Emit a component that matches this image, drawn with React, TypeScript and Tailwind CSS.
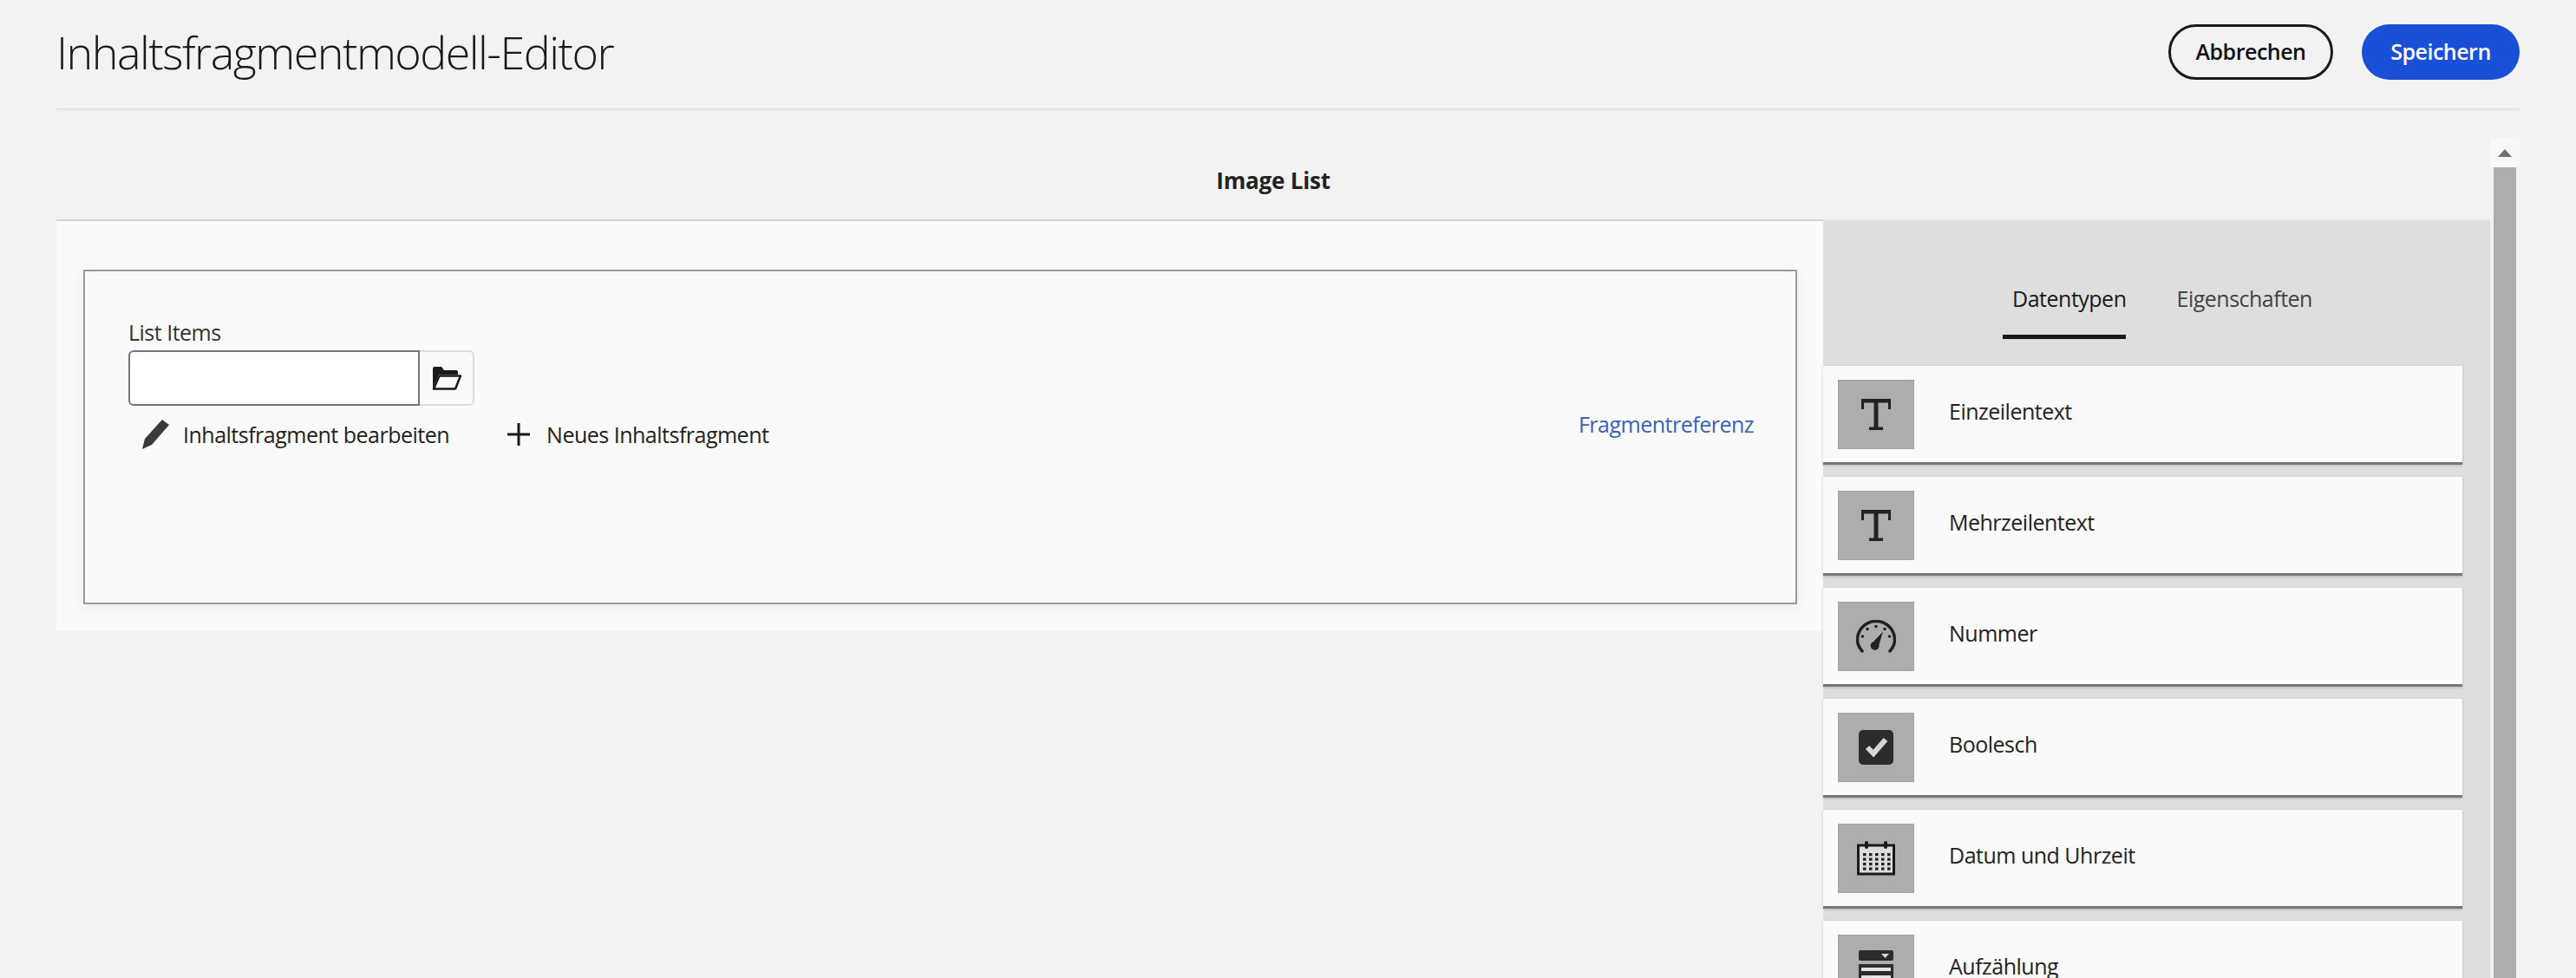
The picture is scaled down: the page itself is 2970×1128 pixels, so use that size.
const dataTypes = [
    { label: "Einzeilentext", icon: <TextIcon /> },
    { label: "Mehrzeilentext", icon: <TextIcon /> },
    { label: "Nummer", icon: <GaugeIcon /> },
    { label: "Boolesch", icon: <CheckIcon /> },
    { label: "Datum und Uhrzeit", icon: <CalendarIcon /> },
    { label: "Aufzählung", icon: <EnumIcon /> },
];

function TextIcon() {
    return (
        <svg width="36" height="38" viewBox="0 0 36 38" fill="#222">
            <path d="M1 1h34v12h-3V5.500H20.500V33.500H26v3.500H10v-3.500h5.500V5.500H4V13H1z" />
        </svg>
    );
}

function GaugeIcon() {
    return (
        <svg width="46" height="38" viewBox="0 0 46 38" fill="none">
            <path d="M7 36C3.500 32 1.500 28 1.500 23a21.500 21.500 0 0 1 43 0c0 5-2 9-5.500 13" stroke="#222" strokeWidth="3.500" strokeLinecap="round" />
            <g fill="#222">
                <circle cx="23" cy="7.500" r="1.800" />
                <circle cx="13" cy="10.500" r="1.800" />
                <circle cx="33" cy="10.500" r="1.800" />
                <circle cx="7.500" cy="19" r="1.800" />
                <circle cx="38.500" cy="19" r="1.800" />
                <path d="M31 13.500 26.500 28.500a5 5 0 1 1-6.500-3.500z" />
            </g>
        </svg>
    );
}

function CheckIcon() {
    return (
        <svg width="40" height="40" viewBox="0 0 40 40">
            <rect width="40" height="40" rx="5" fill="#2c2c2c" />
            <path d="M10 20l7 7L31 11" fill="none" stroke="#d6d6d6" strokeWidth="6" />
        </svg>
    );
}

function CalendarIcon() {
    const cells = [];
    for (let r = 0; r < 4; r++) {
        for (let c = 0; c < 5; c++) {
            cells.push(<rect key={`${r}-${c}`} x={7 + c * 7} y={14 + r * 5.500} width="3.500" height="3.200" fill="#222" />);
        }
    }
    return (
        <svg width="44" height="40" viewBox="0 0 44 40">
            <rect x="1.500" y="5" width="41" height="33" fill="#dcdcdc" stroke="#1a1a1a" strokeWidth="3" />
            <rect x="9" y="0" width="4" height="9" rx="2" fill="#1a1a1a" />
            <rect x="31" y="0" width="4" height="9" rx="2" fill="#1a1a1a" />
            {cells}
        </svg>
    );
}

function EnumIcon() {
    return (
        <svg width="40" height="44" viewBox="0 0 40 44">
            <rect width="40" height="12" rx="2" fill="#2c2c2c" />
            <path d="M26 4h9l-4.500 5z" fill="#d6d6d6" />
            <rect x="0" y="16" width="40" height="28" fill="#2c2c2c" />
            <rect x="3" y="20" width="34" height="4" fill="#e4e4e4" />
            <rect x="3" y="29" width="34" height="4" fill="#e4e4e4" />
        </svg>
    );
}

function FolderIcon() {
    return (
        <svg width="34" height="28" viewBox="0 0 34 28" fill="#1a1a1a">
            <path d="M1 26 1 3a2 2 0 0 1 2-2h8l3 4h14a2 2 0 0 1 2 2v3H8z" />
            <path d="M8.500 11.500H33L27 26.500H2z" fill="#fafafa" stroke="#1a1a1a" strokeWidth="2.500" strokeLinejoin="round" />
        </svg>
    );
}

function PencilIcon() {
    return (
        <svg width="32" height="34" viewBox="0 0 32 34" fill="#3a3a3a">
            <path d="M24 0l8 6L12 29 1 34l3-12z" />
        </svg>
    );
}

function PlusIcon() {
    return (
        <svg width="26" height="26" viewBox="0 0 26 26" fill="#1a1a1a">
            <rect x="11.500" y="0" width="3" height="26" />
            <rect x="0" y="11.500" width="26" height="3" />
        </svg>
    );
}

export default function App() {
    return (
        <div className="h-[1128px] overflow-hidden bg-[#f2f2f2] px-[65px] font-['Open_Sans',sans-serif] text-[#222]">
            <header className="flex h-[127px] items-center justify-between border-b-2 border-[#e2e2e2] pb-[5px]">
                <h1 className="text-[52px] font-light tracking-[-1.5px] text-[#1a1a1a]">Inhaltsfragmentmodell-Editor</h1>
                <div className="flex gap-[33px] text-[25px] font-semibold">
                    <button className="h-[64px] w-[190px] rounded-full border-[3px] border-[#1a1a1a] tracking-[-0.5px] text-[#111]">Abbrechen</button>
                    <button className="h-[64px] w-[182px] rounded-full bg-[#1a50d6] tracking-[-0.5px] text-white">Speichern</button>
                </div>
            </header>

            <div className="mt-[33px] flex">
                <div className="w-[2806px]">
                    <div className="flex h-[93px] items-center justify-center pt-[4px] text-[26px] font-bold tracking-[-0.2px] text-[#222]">Image List</div>
                    <div className="flex">
                        <main className="h-[475px] w-[2037px] border-t-2 border-[#d4d4d4] bg-[#fafafa] pt-[56px] pr-[30px] pl-[31px]">
                            <div className="flex h-[386px] items-start justify-between border-2 border-[#9a9a9a] pt-[52px] pr-[48px] pl-[50px] shadow-[0_4px_14px_rgba(0,0,0,0.06)]">
                                <div>
                                    <label className="mb-[3px] block text-[25px] leading-[36px] tracking-[-0.5px] text-[#333]">List Items</label>
                                    <div className="flex h-[64px]">
                                        <input className="h-full w-[336px] rounded-l-[6px] border-2 border-[#777] bg-white" />
                                        <div className="flex h-full w-[63px] items-center justify-center rounded-r-[6px] border-2 border-l-0 border-[#dcdcdc]">
                                            <FolderIcon />
                                        </div>
                                    </div>
                                    <div className="mt-[15px] flex items-center pl-[15px] text-[25px] leading-[36px] tracking-[-0.5px] text-[#222]">
                                        <PencilIcon />
                                        <span className="ml-[16px]">Inhaltsfragment bearbeiten</span>
                                        <span className="ml-[67px]"><PlusIcon /></span>
                                        <span className="ml-[19px]">Neues Inhaltsfragment</span>
                                    </div>
                                </div>
                                <a className="mt-[106px] text-[25px] leading-[36px] tracking-[-0.5px] text-[#3a62b8]">Fragmentreferenz</a>
                            </div>
                        </main>

                        <aside className="w-[769px] border-t-2 border-[#e6e6e6] bg-[#dedede] pr-[32px]">
                            <div className="flex h-[136px] items-end justify-center gap-[58px] pl-[34px] text-[25px] tracking-[-0.5px]">
                                <div className="border-b-[5px] border-[#1a1a1a] pb-[23px] pl-[11px] text-[#1a1a1a]">Datentypen</div>
                                <div className="pb-[28px] text-[#444]">Eigenschaften</div>
                            </div>
                            <div className="mt-[31px] flex flex-col gap-[14px]">
                                {dataTypes.map((item) => (
                                    <div key={item.label} className="flex h-[114px] items-center border-b-[3px] border-[#777] bg-[#fafafa] pl-[17px] shadow-[0_1px_3px_rgba(0,0,0,0.2)]">
                                        <div className="flex h-[80px] w-[88px] items-center justify-center border border-[#a2a2a2] bg-[#adadad]">{item.icon}</div>
                                        <span className="mb-[5px] ml-[40px] text-[25px] tracking-[-0.5px] text-[#222]">{item.label}</span>
                                    </div>
                                ))}
                            </div>
                        </aside>
                    </div>
                </div>

                <div className="flex w-[34px] flex-col">
                    <div className="flex h-[33px] items-center justify-center bg-[#f7f7f7]">
                        <div className="h-0 w-0 border-x-[8px] border-b-[9px] border-x-transparent border-b-[#707070]" />
                    </div>
                    <div className="mx-auto h-[1000px] w-[26px] bg-[#adadad]" />
                </div>
            </div>
        </div>
    );
}
